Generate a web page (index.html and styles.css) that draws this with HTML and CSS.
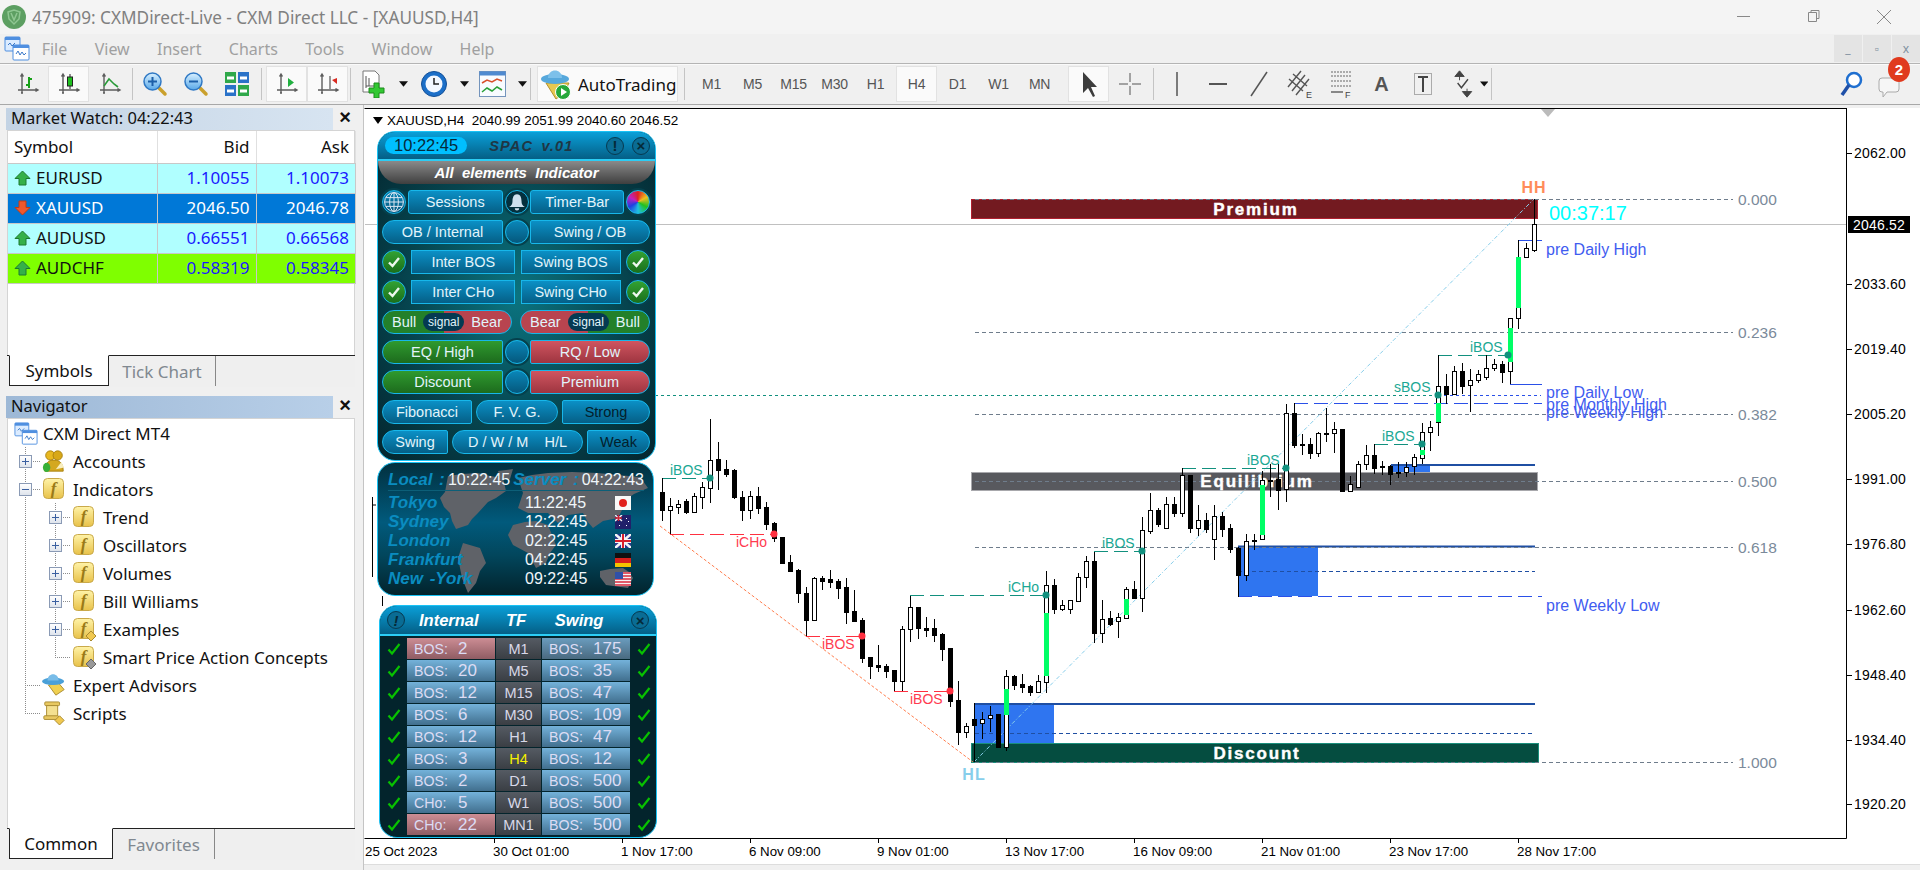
FILE: index.html
```html
<!DOCTYPE html>
<html lang="en">
  <head>
    <meta charset="UTF-8" />
    <title>475909: CXMDirect-Live - CXM Direct LLC - [XAUUSD,H4]</title>
    <link rel="stylesheet" href="styles.css">
  </head>
  <body>
    <!-- shared icons -->
    <svg class="defs" width="0" height="0">
      <defs>
        <linearGradient id="gold" x1="0" y1="0" x2="0" y2="1"><stop offset="0" stop-color="#fff3a8"/><stop offset="1" stop-color="#e8c24a"/></linearGradient>
        <linearGradient id="lens" x1="0" y1="0" x2="0" y2="1"><stop offset="0" stop-color="#d8f0ff"/><stop offset="1" stop-color="#58a8e8"/></linearGradient>
        <symbol id="i-app" viewBox="0 0 26 26">
          <rect x="1" y="1" width="15" height="14" rx="1" fill="#dcecff" stroke="#4f8fe0"/><rect x="1" y="1" width="15" height="3" fill="#4f8fe0"/>
          <rect x="9" y="9" width="16" height="15" rx="1" fill="#fff" stroke="#4f8fe0"/><rect x="9" y="9" width="16" height="3" fill="#4f8fe0"/>
          <path d="M4 9l2-2 2 3 3-3M12 18l2-3 2 4 2-3 2 3 2-2" fill="none" stroke="#3a78c8"/>
        </symbol>
        <symbol id="i-axis" viewBox="0 0 24 24">
          <path d="M6 2v19M2 18h20M4.5 4.5L6 2l1.5 2.5M19.5 16.5L22 18l-2.500 1.500M5 21h2" fill="none" stroke="#5c5c5c" stroke-width="1.400"/>
        </symbol>
        <symbol id="i-f" viewBox="0 0 24 24">
          <rect x="1.500" y="1.500" width="20" height="20" rx="4" fill="url(#gold)" stroke="#c9a94a"/>
          <text x="11.500" y="17" text-anchor="middle" class="icon-f">f</text>
        </symbol>
        <symbol id="i-zoom" viewBox="0 0 26 26">
          <path d="M16 16l7 7" stroke="#caa02c" stroke-width="3.500" stroke-linecap="round"/>
          <circle cx="10.500" cy="10.500" r="8.500" fill="url(#lens)" stroke="#2f78c4" stroke-width="1.500"/>
        </symbol>
        <symbol id="i-drop" viewBox="0 0 10 6"><path d="M0 0h10L5 6z" fill="#111"/></symbol>
        <symbol id="i-up" viewBox="0 0 17 16"><path d="M8.500 1L16 8.500h-4V15H5V8.500H1z" fill="#35b04a" stroke="#1c7a30"/></symbol>
        <symbol id="i-down" viewBox="0 0 17 16"><path d="M8.500 15L1 7.500h4V1h7v6.500h4z" fill="#f0582c" stroke="#c03a14"/></symbol>
        <symbol id="i-check" viewBox="0 0 14 14"><path d="M1.500 7.500L5 11.500 12.500 2" fill="none" stroke="#08c000" stroke-width="2.200"/></symbol>
        <symbol id="i-tick" viewBox="0 0 14 14"><path d="M2 7.500L5.500 11 12 3" fill="none" stroke="#eef7ee" stroke-width="2.400"/></symbol>
      </defs>
    </svg>

    <header class="titlebar">
      <svg class="titlebar__logo" width="24" height="24" viewBox="0 0 24 24"><circle cx="12" cy="12" r="12" fill="#5d9f62"/><path d="M6 7l6-2 6 2-1 7-5 5-5-5zM9 8l3 7 3-7" fill="none" stroke="#8fc792" stroke-width="1.500"/></svg>
      <span class="titlebar__text">475909: CXMDirect-Live - CXM Direct LLC - [XAUUSD,H4]</span>
      <div class="winctl">
        <span class="winctl__btn">
          <svg width="14" height="14" viewBox="0 0 14 14"><path d="M0 7.500h13" stroke="#888"/></svg>
        </span>
        <span class="winctl__btn">
          <svg width="14" height="14" viewBox="0 0 14 14"><path d="M1.500 3.500h8v9h-8zM4 3.500V1.500h8v8h-2.500" fill="none" stroke="#888"/></svg>
        </span>
        <span class="winctl__btn">
          <svg width="16" height="16" viewBox="0 0 16 16"><path d="M1 1l14 14M15 1L1 15" stroke="#888"/></svg>
        </span>
      </div>
    </header>

    <nav class="menubar">
      <svg class="menubar__icon" width="26" height="26"><use href="#i-app"/></svg>
      <span class="menubar__item">File</span>
      <span class="menubar__item">View</span>
      <span class="menubar__item">Insert</span>
      <span class="menubar__item">Charts</span>
      <span class="menubar__item">Tools</span>
      <span class="menubar__item">Window</span>
      <span class="menubar__item">Help</span>
      <div class="mdi">
        <span class="mdi__btn">_</span><span class="mdi__btn">▫</span><span class="mdi__btn">x</span>
      </div>
    </nav>

    <div class="toolbar">
      <span class="grip"></span>
      <span class="tool"><svg width="24" height="24"><use href="#i-axis"/><path d="M13 5v11M13 7h3M10 13h3" stroke="#18a018" stroke-width="2"/></svg></span>
      <span class="tool is-on"><svg width="24" height="24"><use href="#i-axis"/><path d="M13 2v15" stroke="#222"/><rect x="10.500" y="5" width="5" height="9" fill="#20c020" stroke="#222"/></svg></span>
      <span class="tool"><svg width="24" height="24"><use href="#i-axis"/><path d="M6 14l5-7 5 5 4 3" fill="none" stroke="#2a9a3a" stroke-width="1.600"/></svg></span>
      <span class="sep sep--tight"></span>
      <span class="tool"><svg width="26" height="26"><use href="#i-zoom"/><path d="M6 10.500h9M10.500 6v9" stroke="#1c5fa8" stroke-width="2"/></svg></span>
      <span class="tool"><svg width="26" height="26"><use href="#i-zoom"/><path d="M6 10.500h9" stroke="#1c5fa8" stroke-width="2"/></svg></span>
      <span class="tool"><svg width="26" height="26" viewBox="0 0 26 26"><rect x="1" y="1" width="11" height="11" fill="#2fa84a"/><rect x="14" y="1" width="11" height="11" fill="#2a72c8"/><rect x="1" y="14" width="11" height="11" fill="#2a72c8"/><rect x="14" y="14" width="11" height="11" fill="#2fa84a"/><path d="M3 7h7M16 7h7M3 20h7M16 20h7" stroke="#fff" stroke-width="3"/></svg></span>
      <span class="sep sep--wide"></span>
      <span class="tool is-on"><svg width="24" height="24"><use href="#i-axis"/><path d="M13 6v9l6-4.500z" fill="#22b040"/></svg></span>
      <span class="tool is-on"><svg width="24" height="24"><use href="#i-axis"/><path d="M14 4v13" stroke="#333"/><path d="M16 8l5-2v6z" fill="#d82a20"/></svg></span>
      <span class="sep"></span>
      <span class="tool tool--drop"><svg width="26" height="28" viewBox="0 0 26 28"><path d="M2 1h12l4 4v17H2z" fill="#fff" stroke="#777"/><path d="M5 6v12M5 16h9M8 8v8" stroke="#555"/><path d="M13 13h5v5h5v5h-5v5h-5v-5H8v-5h5z" fill="#32c832" stroke="#1c8a1c"/></svg><svg width="9" height="6"><use href="#i-drop"/></svg></span>
      <span class="tool tool--drop"><svg width="28" height="28" viewBox="0 0 28 28"><circle cx="14" cy="14" r="12.500" fill="#1c6fc8" stroke="#124e96"/><circle cx="14" cy="14" r="8.500" fill="#f4f8ff"/><path d="M14 8v6h5" fill="none" stroke="#222" stroke-width="1.500"/></svg><svg width="9" height="6"><use href="#i-drop"/></svg></span>
      <span class="tool tool--drop"><svg width="27" height="26" viewBox="0 0 27 26"><rect x=".5" y=".5" width="26" height="25" fill="#f8fbff" stroke="#7494bc"/><rect x=".5" y=".5" width="26" height="4" fill="#4f8ad0"/><path d="M3 12l5-3 5 2 5-3 5 2" fill="none" stroke="#d8502c" stroke-width="1.500"/><path d="M3 21l5-4 5 3 5-4 5 3" fill="none" stroke="#28a038" stroke-width="1.500"/></svg><svg width="9" height="6"><use href="#i-drop"/></svg></span>
      <span class="sep sep--auto"></span>
      <span class="grip"></span>
      <span class="autotrade">
        <svg width="32" height="34" viewBox="0 0 32 34"><path d="M6 16l10 16 8-6 5-10z" fill="#e8c850" stroke="#b09030"/><ellipse cx="15" cy="12" rx="14" ry="5" fill="#56a8dc"/><path d="M8 11c0-10 14-10 14 0z" fill="#7cc0ea"/><circle cx="23" cy="25" r="7.500" fill="#26a83a" stroke="#fff"/><path d="M21 21v8l6-4z" fill="#fff"/></svg>
        <span>AutoTrading</span>
      </span>
      <span class="sep sep--period"></span>
      <span class="tool tool--text">M1</span>
      <span class="tool tool--text">M5</span>
      <span class="tool tool--text">M15</span>
      <span class="tool tool--text">M30</span>
      <span class="tool tool--text">H1</span>
      <span class="tool tool--text is-on">H4</span>
      <span class="tool tool--text">D1</span>
      <span class="tool tool--text">W1</span>
      <span class="tool tool--text">MN</span>
      <span class="grip grip--draw"></span>
      <span class="tool is-on"><svg width="18" height="28" viewBox="0 0 18 28"><path d="M3 2v21l5-5 5 9 2-1-4-9h6z" fill="#3c3c3c"/></svg></span>
      <span class="tool"><svg width="24" height="24" viewBox="0 0 24 24"><path d="M12 1v9M12 14v9M1 12h9M14 12h9" stroke="#555"/></svg></span>
      <span class="sep sep--draw"></span>
      <span class="tool"><svg width="8" height="28" viewBox="0 0 8 28"><path d="M4 2v24" stroke="#555" stroke-width="1.500"/></svg></span>
      <span class="tool"><svg width="22" height="8" viewBox="0 0 22 8"><path d="M2 4h18" stroke="#555" stroke-width="2"/></svg></span>
      <span class="tool"><svg width="22" height="28" viewBox="0 0 22 28"><path d="M3 26L19 2" stroke="#555" stroke-width="1.500"/></svg></span>
      <span class="tool"><svg width="28" height="30" viewBox="0 0 28 30"><path d="M2 18L15 2M6 22L19 6M10 26L23 10M3 10l14 12M7 5l14 12" fill="none" stroke="#555" stroke-width="1.400"/><text x="20" y="29" class="icon-mark">E</text></svg></span>
      <span class="tool"><svg width="26" height="30" viewBox="0 0 26 30"><path d="M3 3h20M3 7h20M3 12h20M3 17h20" stroke="#666" stroke-dasharray="2 1"/><path d="M3 23h12" stroke="#666" stroke-width="1.500"/><text x="17" y="29" class="icon-mark">F</text></svg></span>
      <span class="tool"><span class="tool__a">A</span></span>
      <span class="tool"><svg width="22" height="28" viewBox="0 0 22 28"><rect x="2.500" y="3.500" width="17" height="21" fill="none" stroke="#666" stroke-dasharray="1 1"/><path d="M6 7h10M11 7v15" stroke="#444" stroke-width="2"/></svg></span>
      <span class="tool tool--drop tool--arrows"><svg width="24" height="30" viewBox="0 0 24 30"><path d="M8 1l5 6H3zM8 7v4" fill="#444" stroke="#444"/><path d="M6 14l4 5 7-9" fill="none" stroke="#444" stroke-width="1.500"/><path d="M16 29l-5-6h10zM16 23v-3" fill="#444" stroke="#444"/></svg><svg width="9" height="6"><use href="#i-drop"/></svg></span>
      <span class="sep sep--thin"></span>
      <span class="toolbar__end">
        <svg width="24" height="26" viewBox="0 0 24 26"><circle cx="14" cy="9" r="7" fill="#fff" stroke="#1f6fd0" stroke-width="2.500"/><path d="M9 14L2 24" stroke="#1f50a8" stroke-width="3.500"/></svg>
        <span class="chatbox">
          <svg width="26" height="24" viewBox="0 0 26 24"><path d="M4 2h14a3 3 0 013 3v8a3 3 0 01-3 3H9l-4 5v-5H4a3 3 0 01-3-3V5a3 3 0 013-3z" fill="#f6f6f6" stroke="#aaa"/></svg>
          <span class="chatbox__badge">2</span>
        </span>
      </span>
    </div>

    <main class="workspace">
      <aside class="sidebar">
        <section class="dock dock--market">
          <div class="dock__title dock__title--dim"><span>Market Watch: 04:22:43</span><b class="dock__close">×</b></div>
          <div class="dock__body">
            <table class="watch">
              <thead><tr><th class="watch__sym">Symbol</th><th>Bid</th><th>Ask</th></tr></thead>
              <tbody>
                <tr class="row-cyan"><td class="watch__sym"><svg width="17" height="16"><use href="#i-up"/></svg>EURUSD</td><td>1.10055</td><td>1.10073</td></tr>
                <tr class="row-sel"><td class="watch__sym"><svg width="17" height="16"><use href="#i-down"/></svg>XAUUSD</td><td>2046.50</td><td>2046.78</td></tr>
                <tr class="row-cyan"><td class="watch__sym"><svg width="17" height="16"><use href="#i-up"/></svg>AUDUSD</td><td>0.66551</td><td>0.66568</td></tr>
                <tr class="row-lime"><td class="watch__sym"><svg width="17" height="16"><use href="#i-up"/></svg>AUDCHF</td><td>0.58319</td><td>0.58345</td></tr>
              </tbody>
            </table>
          </div>
          <div class="tabs"><span class="tabs__item is-active">Symbols</span><span class="tabs__item tabs__item--second">Tick Chart</span></div>
        </section>

        <section class="dock dock--nav">
          <div class="dock__title"><span>Navigator</span><b class="dock__close">×</b></div>
          <div class="dock__body tree">
            <div class="tree__row tree__row--root"><svg width="24" height="24"><use href="#i-app"/></svg><span>CXM Direct MT4</span></div>
            <div class="tree__row"><span class="g g--t"><i class="exp"></i></span>
              <svg width="24" height="24" viewBox="0 0 26 26"><circle cx="9" cy="7" r="5" fill="#e8b820" stroke="#a88010"/><circle cx="17" cy="7" r="5" fill="#d8a818" stroke="#a88010"/><path d="M3 24c0-12 8-12 10-12s10 0 10 12z" fill="#d4a820" stroke="#a88010"/><path d="M15 22l6-8 3 6z" fill="#f8eec0"/><ellipse cx="5" cy="20" rx="4" ry="5" fill="#38b038"/></svg>
              <span>Accounts</span></div>
            <div class="tree__row"><span class="g g--t"><i class="exp is-open"></i></span><svg width="24" height="24"><use href="#i-f"/></svg><span>Indicators</span></div>
            <div class="tree__row"><span class="g g--v"></span><span class="g g--t"><i class="exp"></i></span><svg width="24" height="24"><use href="#i-f"/></svg><span>Trend</span></div>
            <div class="tree__row"><span class="g g--v"></span><span class="g g--t"><i class="exp"></i></span><svg width="24" height="24"><use href="#i-f"/></svg><span>Oscillators</span></div>
            <div class="tree__row"><span class="g g--v"></span><span class="g g--t"><i class="exp"></i></span><svg width="24" height="24"><use href="#i-f"/></svg><span>Volumes</span></div>
            <div class="tree__row"><span class="g g--v"></span><span class="g g--t"><i class="exp"></i></span><svg width="24" height="24"><use href="#i-f"/></svg><span>Bill Williams</span></div>
            <div class="tree__row"><span class="g g--v"></span><span class="g g--t"><i class="exp"></i></span><svg width="24" height="24"><use href="#i-f"/><path d="M19 14l5 5-5 5-5-5z" fill="#f0c850" stroke="#a88a30"/></svg><span>Examples</span></div>
            <div class="tree__row"><span class="g g--v"></span><span class="g g--l"></span><svg width="24" height="24"><use href="#i-f"/><path d="M19 14l5 5-5 5-5-5z" fill="#999" stroke="#666"/></svg><span>Smart Price Action Concepts</span></div>
            <div class="tree__row"><span class="g g--t"></span>
              <svg width="24" height="24" viewBox="0 0 26 26"><path d="M7 13l8 11 9-6-6-7z" fill="#f0d050" stroke="#a88a30"/><ellipse cx="12" cy="9" rx="12" ry="4" fill="#4aa0d8"/><path d="M6 8c0-9 12-9 12 0z" fill="#78bce8"/></svg>
              <span>Expert Advisors</span></div>
            <div class="tree__row"><span class="g g--l"></span>
              <svg width="24" height="24" viewBox="0 0 26 26"><rect x="3" y="1" width="16" height="4" rx="1" fill="#e8c860" stroke="#a88a30"/><rect x="5" y="5" width="12" height="13" fill="#f4e090" stroke="#a88a30"/><rect x="2" y="16" width="16" height="4" rx="1" fill="#e8c860" stroke="#a88a30"/><path d="M19 16l5 5-5 5-5-5z" fill="#f0c850" stroke="#a88a30"/></svg>
              <span>Scripts</span></div>
          </div>
          <div class="tabs"><span class="tabs__item is-active tabs__item--wide">Common</span><span class="tabs__item tabs__item--second tabs__item--fav">Favorites</span></div>
        </section>
      </aside>

      <section class="chart">
        <!-- viewBox uses page coordinates, the chart starts at 364,108 -->
        <svg class="chart__canvas" width="1556" height="756" viewBox="364 108 1556 756">
          <path d="M364.500 108.500H1846.500V838.500H364.500" fill="none" stroke="#000"/>
          <path d="M373 117h10l-5 7z" fill="#000"/>
          <text x="387" y="125" class="t-info">XAUUSD,H4  2040.99 2051.99 2040.60 2046.52</text>
          <path d="M1541 109h14l-7 8z" fill="#bbb"/>

          <path d="M365 224.500H1846" stroke="#c0c0c0"/>
          <!-- order blocks -->
          <rect x="975" y="703" width="79" height="42" fill="#2f75f0"/>
          <rect x="1238" y="546" width="80" height="50" fill="#2f75f0"/>
          <rect x="1391" y="465" width="39" height="7" fill="#2f75f0"/>
          <path d="M975 704H1535M1238 546.500H1535M1391 465H1535" stroke="#1f4fa3" stroke-width="2"/>
          <path d="M975 733.500H1535M1238 571.500H1535" stroke="#1f4fa3" stroke-dasharray="4 3"/>

          <!-- premium / equilibrium / discount -->
          <rect x="971.500" y="199.500" width="566" height="19" fill="#731a20" stroke="#b02030"/>
          <rect x="971.500" y="472.500" width="566" height="18" fill="#58595e" stroke="#a8a8ac"/>
          <rect x="971.500" y="743.500" width="567" height="19" fill="#054d40" stroke="#1a8f7c"/>

          <!-- fibonacci levels -->
          <path class="fib" d="M975 199.500H1733M975 332.500H1733M975 414.500H1733M975 481.500H1733M975 547.500H1733M975 762.500H1733"/>
          <text x="1738" y="205" class="t-fib">0.000</text>
          <text x="1738" y="338" class="t-fib">0.236</text>
          <text x="1738" y="420" class="t-fib">0.382</text>
          <text x="1738" y="487" class="t-fib">0.500</text>
          <text x="1738" y="553" class="t-fib">0.618</text>
          <text x="1738" y="768" class="t-fib">1.000</text>

          <text x="1256" y="215" class="t-band">Premium</text>
          <text x="1257" y="487" class="t-band">Equilibrium</text>
          <text x="1257" y="759" class="t-band">Discount</text>

          <!-- swing legs -->
          <path d="M660 526L973 762" stroke="#ff7f50" stroke-dasharray="3 2" fill="none"/>
          <path d="M974 762L1534 199" stroke="#87ceeb" stroke-dasharray="4 2 1 2" fill="none"/>

          <!-- structure lines -->
          <path class="s-long s-green" d="M662 478.500H710M910 595.500H1046M1094 551.500H1142M1182 468.500H1286M1374 444.500H1422M1438 355.500H1510"/>
          <path class="s-long s-red" d="M670 534.500H774M806 636.500H862M894 691.500H950"/>
          <path d="M655 395.500H1438" stroke="#12907e" stroke-dasharray="3 3"/>
          <path d="M1438 395.500H1541" stroke="#2a50e8" stroke-dasharray="3 3"/>
          <path class="s-long s-blue" d="M1294 403.500H1542M1238 596.500H1542"/>
          <path d="M1518 240.500H1542M1510 384.500H1542" stroke="#2a50e8" stroke-width="1"/>
          <path d="M372.500 497V577M372 505h4M382.500 596v10" stroke="#000"/>

          <g id="candles"></g>

          <circle cx="710" cy="478" r="3.500" fill="#12907e"/>
          <circle cx="1046" cy="595" r="3.500" fill="#12907e"/>
          <circle cx="1142" cy="551" r="3.500" fill="#12907e"/>
          <circle cx="1286" cy="468" r="3.500" fill="#12907e"/>
          <circle cx="1422" cy="444" r="3.500" fill="#12907e"/>
          <circle cx="1438" cy="395" r="3.500" fill="#12907e"/>
          <circle cx="1508" cy="355" r="3.500" fill="#12907e"/>
          <circle cx="774" cy="534" r="3.500" fill="#ff3040"/>
          <circle cx="862" cy="636" r="3.500" fill="#ff3040"/>
          <circle cx="950" cy="691" r="3.500" fill="#ff3040"/>

          <text x="670" y="475" class="t-sig t-sig--g">iBOS</text>
          <text x="1008" y="592" class="t-sig t-sig--g">iCHo</text>
          <text x="1102" y="548" class="t-sig t-sig--g">iBOS</text>
          <text x="1247" y="465" class="t-sig t-sig--g">iBOS</text>
          <text x="1382" y="441" class="t-sig t-sig--g">iBOS</text>
          <text x="1470" y="352" class="t-sig t-sig--g">iBOS</text>
          <text x="1394" y="392" class="t-sig t-sig--g">sBOS</text>
          <text x="736" y="547" class="t-sig t-sig--r">iCHo</text>
          <text x="822" y="649" class="t-sig t-sig--r">iBOS</text>
          <text x="910" y="704" class="t-sig t-sig--r">iBOS</text>

          <text x="1534" y="193" class="t-swing t-swing--hh">HH</text>
          <text x="974" y="780" class="t-swing t-swing--hl">HL</text>
          <text x="1549" y="220" class="t-timer">00:37:17</text>

          <text x="1546" y="255" class="t-pre">pre Daily High</text>
          <text x="1546" y="398" class="t-pre">pre Daily Low</text>
          <text x="1546" y="410" class="t-pre">pre Monthly High</text>
          <text x="1546" y="418" class="t-pre">pre Weekly High</text>
          <text x="1546" y="611" class="t-pre">pre Weekly Low</text>

          <!-- axes -->
          <path d="M1846.500 108V838" stroke="#000"/>
          <path d="M1847 153.500h5M1847 284.500h5M1847 349.500h5M1847 414.500h5M1847 479.500h5M1847 544.500h5M1847 610.500h5M1847 675.500h5M1847 740.500h5M1847 804.500h5" stroke="#000"/>
          <path d="M494.500 838v5M622.500 838v5M750.500 838v5M878.500 838v5M1006.500 838v5M1134.500 838v5M1262.500 838v5M1390.500 838v5M1518.500 838v5" stroke="#000"/>
          <g class="t-axis">
            <text x="1854" y="158">2062.00</text>
            <text x="1854" y="289">2033.60</text>
            <text x="1854" y="354">2019.40</text>
            <text x="1854" y="419">2005.20</text>
            <text x="1854" y="484">1991.00</text>
            <text x="1854" y="549">1976.80</text>
            <text x="1854" y="615">1962.60</text>
            <text x="1854" y="680">1948.40</text>
            <text x="1854" y="745">1934.40</text>
            <text x="1854" y="809">1920.20</text>
          </g>
          <rect x="1848" y="216" width="62" height="17" fill="#000"/>
          <text x="1853" y="230" class="t-axis t-axis--now">2046.52</text>
          <g class="t-axis t-axis--time">
            <text x="365" y="856">25 Oct 2023</text>
            <text x="493" y="856">30 Oct 01:00</text>
            <text x="621" y="856">1 Nov 17:00</text>
            <text x="749" y="856">6 Nov 09:00</text>
            <text x="877" y="856">9 Nov 01:00</text>
            <text x="1005" y="856">13 Nov 17:00</text>
            <text x="1133" y="856">16 Nov 09:00</text>
            <text x="1261" y="856">21 Nov 01:00</text>
            <text x="1389" y="856">23 Nov 17:00</text>
            <text x="1517" y="856">28 Nov 17:00</text>
          </g>
        </svg>

        <!-- indicator control panel -->
        <div class="spac">
          <div class="spac__head">
            <span class="spac__clock">10:22:45</span>
            <span class="spac__name">SPAC v.01</span>
            <span class="roundbtn">!</span>
            <span class="roundbtn">×</span>
          </div>
          <div class="spac__sub">All&nbsp; elements&nbsp; Indicator</div>
          <div class="spac__rows">
            <div class="srow">
              <span class="knob"><svg width="20" height="20" viewBox="0 0 16 16"><g fill="none" stroke="#dbe6f2" stroke-width="0.800"><circle cx="8" cy="8" r="7.500"/><ellipse cx="8" cy="8" rx="3.500" ry="7.500"/><path d="M.5 8h15M1.500 4.500h13M1.500 11.500h13M8 .5v15"/></g></svg></span>
              <span class="pill pill--mid w95">Sessions</span>
              <span class="knob knob--dark"><svg width="18" height="18" viewBox="0 0 16 16"><path d="M8 1c3 0 4 3 4 6s1 4 3 5.500H1C3 11 4 10 4 7s1-6 4-6zM6 13.500a2 2 0 004 0z" fill="#cfe0ee"/></svg></span>
              <span class="pill pill--mid w94">Timer-Bar</span>
              <span class="knob knob--wheel"></span>
            </div>
            <div class="srow">
              <span class="pill pill--left w121">OB / Internal</span>
              <span class="knob"></span>
              <span class="pill pill--right w120">Swing / OB</span>
            </div>
            <div class="srow">
              <span class="knob knob--on"><svg width="14" height="14"><use href="#i-tick"/></svg></span>
              <span class="pill pill--flat w104">Inter BOS</span>
              <span class="pill pill--flat w100">Swing BOS</span>
              <span class="knob knob--on"><svg width="14" height="14"><use href="#i-tick"/></svg></span>
            </div>
            <div class="srow">
              <span class="knob knob--on"><svg width="14" height="14"><use href="#i-tick"/></svg></span>
              <span class="pill pill--flat w104">Inter CHo</span>
              <span class="pill pill--flat w100">Swing CHo</span>
              <span class="knob knob--on"><svg width="14" height="14"><use href="#i-tick"/></svg></span>
            </div>
            <div class="srow">
              <span class="pill pill--split-gr w130">Bull<i class="signal">signal</i>Bear</span>
              <span class="pill pill--split-rg w130">Bear<i class="signal">signal</i>Bull</span>
            </div>
            <div class="srow">
              <span class="pill pill--left pill--green w121">EQ / High</span>
              <span class="knob"></span>
              <span class="pill pill--right pill--red w120">RQ / Low</span>
            </div>
            <div class="srow">
              <span class="pill pill--left pill--green w121">Discount</span>
              <span class="knob"></span>
              <span class="pill pill--right pill--red w120">Premium</span>
            </div>
            <div class="srow">
              <span class="pill pill--left w90">Fibonacci</span>
              <span class="pill w82">F. V. G.</span>
              <span class="pill pill--right pill--off w88">Strong</span>
            </div>
            <div class="srow">
              <span class="pill pill--left w66">Swing</span>
              <span class="pill w131">D / W / M&nbsp;&nbsp;&nbsp; H/L</span>
              <span class="pill pill--right pill--off w63">Weak</span>
            </div>
          </div>
        </div>

        <!-- world clock panel -->
        <div class="clocks">
          <svg class="clocks__map" width="277" height="134" viewBox="0 0 277 134" fill="#5f6268">
            <path d="M70 13l14-2 16-1 12 3 13 2 3 13-10 7-8 4-10 11-6 6-4 6-12 4-4-8-2-8-6-6-4-9 5-6zM120 8l15-2-3 10-10-1zM85 80l17 5 6 15-6 8-4 12-8 10-6-15-4-20zM135 62l12-3 11-1 12 4 4 10 4 10-6 8-4 10-10 5-8-15-15-8-5-10zM140 15l14-3 16-2 24-1 26 1 20 2 22 2 8 11-14 6-6 4-6 12-4 8-15 3-10 7-6-7-4-8-15 2-10 8-10-10-20 0-10-5 5-15zM222 108l10-2 13-1 6 4 4 6-5 10-22-3-6-8z"/>
          </svg>
          <div class="clocks__top">
            <b>Local :</b><span>10:22:45</span>
            <b>Server :</b><span>04:22:43</span>
          </div>
          <div class="clocks__city"><b>Tokyo</b><span>11:22:45</span>
            <svg class="flag" width="16" height="14" viewBox="0 0 16 14"><rect width="16" height="14" fill="#f8f8f8"/><circle cx="8" cy="7" r="4" fill="#e0201c"/></svg></div>
          <div class="clocks__city"><b>Sydney</b><span>12:22:45</span>
            <svg class="flag" width="16" height="14" viewBox="0 0 16 14"><rect width="16" height="14" fill="#20206a"/><path d="M0 0l7 6M7 0L0 6" stroke="#f0f0f0" stroke-width="1.500"/><path d="M3.500 0v6M0 3h7" stroke="#d02030" stroke-width="1.500"/><path d="M11 3h1v1h-1zM13 6h1v1h-1zM11 10h1v1h-1zM4 10h1v1H4z" fill="#fff"/></svg></div>
          <div class="clocks__city"><b>London</b><span>02:22:45</span>
            <svg class="flag" width="16" height="14" viewBox="0 0 16 14"><rect width="16" height="14" fill="#2a3a90"/><path d="M0 0l16 14M16 0L0 14" stroke="#f4f4f4" stroke-width="2.500"/><path d="M8 0v14M0 7h16" stroke="#f4f4f4" stroke-width="4"/><path d="M8 0v14M0 7h16" stroke="#d8202c" stroke-width="2"/></svg></div>
          <div class="clocks__city"><b>Frankfurt</b><span>04:22:45</span>
            <svg class="flag" width="16" height="14" viewBox="0 0 16 14"><rect width="16" height="5" fill="#111"/><rect y="5" width="16" height="5" fill="#d8201c"/><rect y="10" width="16" height="4" fill="#f4c400"/></svg></div>
          <div class="clocks__city"><b>New -York</b><span>09:22:45</span>
            <svg class="flag" width="16" height="14" viewBox="0 0 16 14"><rect width="16" height="14" fill="#f4f4f4"/><path d="M0 1h16M0 4h16M0 7h16M0 10h16M0 13h16" stroke="#d8283c" stroke-width="1.500"/><rect width="8" height="7" fill="#3050a8"/></svg></div>
        </div>

        <!-- timeframe scanner panel -->
        <div class="scan">
          <div class="scan__head">
            <span class="roundbtn">!</span>
            <b class="scan__h1">Internal</b><b class="scan__h2">TF</b><b class="scan__h3">Swing</b>
            <span class="roundbtn">×</span>
          </div>
          <div class="scan__rows">
            <div class="scan__row"><svg width="14" height="14"><use href="#i-check"/></svg><span class="cell cell--red"><i>BOS:</i>2</span><span class="tf">M1</span><span class="cell cell--dim"><i>BOS:</i>175</span><svg width="14" height="14"><use href="#i-check"/></svg></div>
            <div class="scan__row"><svg width="14" height="14"><use href="#i-check"/></svg><span class="cell"><i>BOS:</i>20</span><span class="tf">M5</span><span class="cell"><i>BOS:</i>35</span><svg width="14" height="14"><use href="#i-check"/></svg></div>
            <div class="scan__row"><svg width="14" height="14"><use href="#i-check"/></svg><span class="cell"><i>BOS:</i>12</span><span class="tf">M15</span><span class="cell"><i>BOS:</i>47</span><svg width="14" height="14"><use href="#i-check"/></svg></div>
            <div class="scan__row"><svg width="14" height="14"><use href="#i-check"/></svg><span class="cell"><i>BOS:</i>6</span><span class="tf">M30</span><span class="cell"><i>BOS:</i>109</span><svg width="14" height="14"><use href="#i-check"/></svg></div>
            <div class="scan__row"><svg width="14" height="14"><use href="#i-check"/></svg><span class="cell"><i>BOS:</i>12</span><span class="tf">H1</span><span class="cell"><i>BOS:</i>47</span><svg width="14" height="14"><use href="#i-check"/></svg></div>
            <div class="scan__row"><svg width="14" height="14"><use href="#i-check"/></svg><span class="cell"><i>BOS:</i>3</span><span class="tf tf--now">H4</span><span class="cell"><i>BOS:</i>12</span><svg width="14" height="14"><use href="#i-check"/></svg></div>
            <div class="scan__row"><svg width="14" height="14"><use href="#i-check"/></svg><span class="cell"><i>BOS:</i>2</span><span class="tf">D1</span><span class="cell"><i>BOS:</i>500</span><svg width="14" height="14"><use href="#i-check"/></svg></div>
            <div class="scan__row"><svg width="14" height="14"><use href="#i-check"/></svg><span class="cell"><i>CHo:</i>5</span><span class="tf">W1</span><span class="cell"><i>BOS:</i>500</span><svg width="14" height="14"><use href="#i-check"/></svg></div>
            <div class="scan__row"><svg width="14" height="14"><use href="#i-check"/></svg><span class="cell cell--red"><i>CHo:</i>22</span><span class="tf">MN1</span><span class="cell"><i>BOS:</i>500</span><svg width="14" height="14"><use href="#i-check"/></svg></div>
          </div>
        </div>
      </section>
    </main>

    <script src="chart.js"></script>
  </body>
</html>
```

FILE: styles.css
```css
* {
  box-sizing: border-box;
}

body {
  margin: 0;
  width: 1920px;
  height: 870px;
  overflow: hidden;
  display: flex;
  flex-direction: column;
  background-color: #f0f0f0;
  font-family: "Noto Sans", "Liberation Sans", sans-serif;
  font-size: 16px;
  color: #111;
}

.defs {
  display: block;
  height: 0;
}

.icon-f {
  font: italic bold 17px "Liberation Serif", serif;
  fill: #9a7a18;
}

.icon-mark {
  font: 9px "Liberation Sans", sans-serif;
  fill: #444;
}

/* title and menu */
.titlebar {
  height: 34px;
  display: flex;
  align-items: center;
  padding-left: 2px;
  background-color: #f4f4f4;
  flex-shrink: 0;
}

.titlebar__text {
  margin-left: 6px;
  color: #808080;
  font-size: 17.200px;
}

.winctl {
  margin-left: auto;
  display: flex;
  padding-right: 1px;
}

.winctl__btn {
  width: 70px;
  display: flex;
  justify-content: center;
}

.menubar {
  height: 30px;
  display: flex;
  align-items: center;
  padding-left: 4px;
  background-color: #f0f0f0;
  border-bottom: 1px solid #b4b4b4;
  flex-shrink: 0;
}

.menubar__item {
  padding: 0 13.700px;
  color: #a0a0a0;
  font-size: 16px;
}

.menubar__icon {
  margin-right: -2px;
}

.mdi {
  margin-left: auto;
  display: flex;
  gap: 1px;
  align-self: stretch;
  padding: 1px 0;
}

.mdi__btn {
  width: 28px;
  display: flex;
  align-items: center;
  justify-content: center;
  background-color: #e4e4e4;
  color: #8090a0;
  font-size: 12px;
}

/* toolbar */
.toolbar {
  height: 41px;
  display: flex;
  align-items: center;
  padding-left: 2px;
  background-color: #f0f0f0;
  border-bottom: 1px solid #a8a8a8;
  box-shadow: inset 0 1px 0 #fafafa;
  flex-shrink: 0;
}

.grip {
  width: 4px;
  height: 32px;
  margin: 0 0.500px;
  background-image: radial-gradient(#999 40%, transparent 45%);
  background-size: 2px 2px;
  flex-shrink: 0;
}

.grip--draw {
  margin-right: 3.500px;
}

.tool {
  width: 41px;
  height: 36px;
  display: flex;
  align-items: center;
  justify-content: center;
  gap: 5px;
  flex-shrink: 0;
  border: 1px solid transparent;
  color: #555;
}

.tool--text {
  font: 14px "Liberation Sans", sans-serif;
  letter-spacing: -0.300px;
}

.tool.is-on {
  background-color: #fafafa;
  border-color: #e2e2e2;
}

.tool--drop {
  width: 59px;
  gap: 12px;
  justify-content: flex-start;
  padding-left: 8px;
}

.tool--arrows {
  width: 46px;
  gap: 5px;
}

.tool__a {
  font: bold 20px "Liberation Sans", sans-serif;
  color: #555;
}

.sep {
  width: 4px;
  height: 32px;
  flex-shrink: 0;
  background: linear-gradient(#c4c4c4, #c4c4c4) center / 1px 100% no-repeat;
}

.sep--wide {
  width: 9px;
}

.sep--tight {
  width: 4px;
}

.sep--auto {
  width: 3px;
}

.sep--period {
  width: 13px;
}

.sep--draw {
  width: 6px;
}

.sep--thin {
  width: 4px;
}

.autotrade {
  width: 141px;
  height: 36px;
  display: flex;
  align-items: center;
  gap: 6px;
  padding-left: 2px;
  background-color: #fafafa;
  border: 1px solid #e2e2e2;
  font-size: 17px;
  color: #111;
  flex-shrink: 0;
}

.toolbar__end {
  margin-left: auto;
  display: flex;
  align-items: center;
  gap: 14px;
  padding-right: 16px;
}

.chatbox {
  position: relative;
  display: flex;
  margin-top: 8px;
}

.chatbox__badge {
  position: absolute;
  right: -6px;
  top: -19px;
  width: 22px;
  height: 25px;
  border-radius: 50%;
  display: flex;
  align-items: center;
  justify-content: center;
  background-color: #e03a1e;
  color: #fff;
  font: bold 15px "Liberation Sans", sans-serif;
}

/* main area */
.workspace {
  flex: 1;
  display: flex;
  min-height: 0;
}

.sidebar {
  width: 364px;
  padding: 3px 8px 0 6px;
  display: flex;
  flex-direction: column;
  gap: 9px;
  border-right: 1px solid #c4c4c4;
  flex-shrink: 0;
}

.dock {
  display: flex;
  flex-direction: column;
}

.dock--market {
  height: 279px;
}

.dock--nav {
  height: 464px;
}

.dock__title {
  height: 22px;
  padding: 0 0 3px 5px;
  display: flex;
  align-items: center;
  justify-content: space-between;
  flex-shrink: 0;
  background: linear-gradient(90deg, #9db8d6, #b8cfe8) 0 0 / 327px 100% no-repeat;
  font-size: 16.500px;
}

.dock__title--dim {
  background-image: linear-gradient(90deg, #c3d3e4, #d7e4f1);
}

.dock__close {
  width: 20px;
  font: bold 20px "Liberation Sans", sans-serif;
  text-align: center;
}

.dock__body {
  flex: 1;
  min-height: 0;
  background-color: #fff;
  margin-left: 1px;
  border: 1px solid #d4d4d4;
  border-bottom: none;
}

.watch {
  width: 348px;
  border-collapse: collapse;
  table-layout: fixed;
  font-size: 17px;
}

.watch th,
.watch td {
  height: 30px;
  padding: 0 6px 1px 0;
  text-align: right;
  font-weight: normal;
  border-right: 1px solid #c8c8c8;
  border-bottom: 1px solid #c8c8c8;
  color: #1a1aff;
}

.watch th {
  height: 32px;
  color: #111;
  border-color: #e0e0e0;
  border-bottom-color: #c8c8c8;
}

.watch th.watch__sym,
.watch td.watch__sym {
  width: 149px;
  padding-left: 6px;
  text-align: left;
  color: #111;
}

.watch th:nth-child(2),
.watch td:nth-child(2) {
  width: 99px;
}

.watch td.watch__sym svg {
  margin-right: 5px;
  vertical-align: -2px;
}

.row-cyan td {
  background-color: #b0ffff;
}

.row-lime td {
  background-color: #7fff00;
}

.row-sel td,
.row-sel td.watch__sym {
  background-color: #0078d7;
  color: #fff;
}

.tabs {
  height: 32px;
  margin-left: 1px;
  padding-left: 2px;
  display: flex;
  border-top: 1px solid #222;
  flex-shrink: 0;
  background-color: #efefef;
  font-size: 17px;
}

.tabs__item {
  display: flex;
  align-items: center;
  justify-content: center;
  height: 30px;
  width: 100px;
  color: #808890;
}

.tabs__item.is-active {
  margin-top: -1px;
  height: 31px;
  background-color: #fff;
  color: #111;
  border: 1px solid #222;
  border-top-color: #fff;
}

.tabs__item--wide {
  width: 104px;
}

.tabs__item--second {
  width: 107px;
  border-right: 1px solid #888;
}

.tabs__item--fav {
  width: 102px;
}

/* navigator tree */
.tree {
  padding: 1px 0 0 2px;
  font-size: 17px;
}

.tree__row {
  height: 28px;
  display: flex;
  align-items: center;
  gap: 7px;
}

.tree__row > svg:first-of-type {
  margin-left: -5px;
  flex-shrink: 0;
}

.tree__row--root {
  height: 27px;
  padding-left: 4px;
  gap: 5px;
}

.tree__row--root > svg:first-of-type {
  margin-left: 0;
}

.g + .g {
  margin-left: -7px;
}

.g {
  width: 30px;
  height: 28px;
  display: flex;
  align-items: center;
  justify-content: center;
  flex-shrink: 0;
  background-repeat: no-repeat;
  --dots-v: repeating-linear-gradient(to bottom, #8c8c8c 0 1px, transparent 1px 2px);
  --dots-h: repeating-linear-gradient(to right, #8c8c8c 0 1px, transparent 1px 2px);
}

.g--v {
  background-image: var(--dots-v);
  background-size: 1px 100%;
  background-position: 15px 0;
}

.g--t {
  background-image: var(--dots-v), var(--dots-h);
  background-size: 1px 100%, 15px 1px;
  background-position: 15px 0, 15px 14px;
}

.g--l {
  background-image: var(--dots-v), var(--dots-h);
  background-size: 1px 14px, 15px 1px;
  background-position: 15px 0, 15px 14px;
}

.exp {
  width: 13px;
  height: 13px;
  border: 1px solid #8a9ab5;
  background:
    linear-gradient(#3a5fa0, #3a5fa0) center / 7px 1px no-repeat,
    linear-gradient(#3a5fa0, #3a5fa0) center / 1px 7px no-repeat,
    linear-gradient(#fff, #dfe4ec);
}

.exp.is-open {
  background:
    linear-gradient(#3a5fa0, #3a5fa0) center / 7px 1px no-repeat,
    linear-gradient(#fff, #dfe4ec);
}

/* chart canvas */
.chart {
  position: relative;
  flex: 1;
  min-width: 0;
  margin: 3px 0 5px;
  background-color: #fff;
  border-bottom: 1px solid #ddd;
}

.chart__canvas {
  display: block;
}

.fib {
  stroke: #6f7d8c;
  stroke-dasharray: 4 3;
  fill: none;
}

.s-long {
  fill: none;
  stroke-dasharray: 14 6;
}

.s-green {
  stroke: #12907e;
}

.s-red {
  stroke: #ff3040;
}

.s-blue {
  stroke: #2a50e8;
}

.t-info {
  font: 13.500px "Liberation Sans", sans-serif;
  white-space: pre;
}

.t-fib {
  font: 15.500px "Liberation Sans", sans-serif;
  fill: #7b8a9a;
}

.t-band {
  font: bold 17px "Liberation Sans", sans-serif;
  letter-spacing: 1.800px;
  fill: #fff;
  stroke: #fff;
  stroke-width: 0.400px;
  text-anchor: middle;
}

.t-sig {
  font: 14px "Liberation Sans", sans-serif;
}

.t-sig--g {
  fill: #1aa894;
}

.t-sig--r {
  fill: #ff3b4f;
}

.t-swing {
  font: bold 16px "Liberation Sans", sans-serif;
  letter-spacing: 1px;
  text-anchor: middle;
}

.t-swing--hh {
  fill: #ff8c5a;
}

.t-swing--hl {
  fill: #87ceeb;
}

.t-timer {
  font: 20px "Liberation Sans", sans-serif;
  fill: #00ffff;
}

.t-pre {
  font: 16px "Liberation Sans", sans-serif;
  fill: #3f5cf0;
}

.t-axis {
  font: 14px "Liberation Sans", sans-serif;
  letter-spacing: 0.200px;
  fill: #000;
}

.t-axis--now {
  fill: #fff;
}

.t-axis--time {
  font-size: 13.300px;
  letter-spacing: 0;
}

/* floating indicator panels */
.spac,
.clocks,
.scan {
  position: absolute;
  border: 1px solid #19c3f5;
  border-radius: 18px;
  overflow: hidden;
  font-family: "Liberation Sans", sans-serif;
}

.spac {
  left: 13px;
  top: 23px;
  width: 279px;
  height: 330px;
  background: radial-gradient(ellipse at center, #0b7480 0, #06454f 55%, #04252e 100%);
}

.spac__head {
  height: 29px;
  display: flex;
  align-items: center;
  padding: 0 5px 0 7px;
  gap: 8px;
  background: linear-gradient(#0a9fd8, #045f86);
  border-bottom: 2px solid #2ccdf5;
}

.spac__clock {
  width: 83px;
  height: 17px;
  display: flex;
  align-items: center;
  justify-content: center;
  border-radius: 9px;
  background-color: #00bfff;
  font-size: 16.500px;
  color: #062a3a;
}

.spac__name {
  margin-left: 14px;
  width: 110px;
  font: italic bold 14.500px "Liberation Sans", sans-serif;
  letter-spacing: 1.200px;
  word-spacing: 3px;
  color: #1f3644;
  white-space: nowrap;
}

.roundbtn {
  width: 18px;
  height: 18px;
  display: flex;
  align-items: center;
  justify-content: center;
  border-radius: 50%;
  border: 1px solid #083a50;
  background-color: #0a6c94;
  color: #052a38;
  font-weight: bold;
  font-size: 15px;
  flex-shrink: 0;
}

.spac__sub {
  height: 23px;
  display: flex;
  align-items: center;
  justify-content: center;
  border-radius: 0 0 24px 24px;
  background: linear-gradient(#8a8a8a, #3f3f3f);
  color: #fff;
  font: italic bold 15px "Liberation Sans", sans-serif;
}

.spac__rows {
  padding: 6px 0 0 4px;
  display: flex;
  flex-direction: column;
  gap: 6px;
}

.srow {
  width: 268px;
  height: 24px;
  display: flex;
  align-items: center;
  justify-content: space-between;
}

.knob {
  width: 24px;
  height: 24px;
  display: flex;
  align-items: center;
  justify-content: center;
  border-radius: 50%;
  border: 1px solid #19b8ea;
  box-shadow: 0 0 0 2px #06404c;
  background: linear-gradient(#0a86b8, #05587c);
  flex-shrink: 0;
}

.knob--dark {
  background: #04303e;
}

.knob--wheel {
  background: conic-gradient(#e02020, #f0c020, #20c020, #20c0e0, #2040e0, #c020c0, #e02020);
}

.knob--on {
  background: linear-gradient(#33a233, #1a6e1a);
}

.pill {
  height: 24px;
  display: flex;
  align-items: center;
  justify-content: center;
  border: 1px solid #17b7ea;
  border-radius: 12px;
  background: linear-gradient(#0b90c6, #055f86);
  color: #e2f4fb;
  font-size: 14.500px;
  flex-shrink: 0;
}

.pill--left {
  border-radius: 12px 2px 2px 12px;
}

.pill--right {
  border-radius: 2px 12px 12px 2px;
}

.pill--mid {
  border-radius: 3px;
}

.pill--flat {
  border-radius: 0;
}

.pill--green {
  background: linear-gradient(#2f9a2f, #1d6b1d);
}

.pill--red {
  background: linear-gradient(#d05560, #9e3540);
}

.pill--off {
  color: #04202c;
}

.pill--split-gr,
.pill--split-rg {
  justify-content: space-between;
  padding: 0 9px;
}

.pill--split-gr {
  background: linear-gradient(90deg, #23802a 48%, #b8444f 48%);
}

.pill--split-rg {
  background: linear-gradient(90deg, #b8444f 52%, #23802a 52%);
}

.signal {
  padding: 2px 5px;
  border-radius: 9px;
  background-color: #053a52;
  font-style: normal;
  font-size: 12px;
}

.w63 { width: 63px; }
.w66 { width: 66px; }
.w82 { width: 82px; }
.w88 { width: 88px; }
.w90 { width: 90px; }
.w94 { width: 94px; }
.w95 { width: 95px; }
.w100 { width: 100px; }
.w104 { width: 104px; }
.w120 { width: 120px; }
.w121 { width: 121px; }
.w130 { width: 130px; }
.w131 { width: 131px; }

.clocks {
  left: 13px;
  top: 354px;
  width: 277px;
  height: 134px;
  padding: 6px 9px 0 10px;
  background: linear-gradient(#02303f, #015a7c 45%, #02465c 70%, #02232c);
  color: #f0f6fa;
  font-size: 16px;
}

.clocks__map {
  position: absolute;
  left: 0;
  top: 0;
}

.clocks__top,
.clocks__city {
  position: relative;
  display: flex;
  align-items: center;
  height: 19px;
  white-space: nowrap;
}

.clocks__top {
  height: 22px;
  margin-bottom: 2px;
  border-bottom: 1px solid #0c5f78;
  justify-content: space-between;
}

.clocks__top b,
.clocks__city b {
  font: italic bold 17px "Liberation Sans", sans-serif;
  color: #0a8cc0;
  word-spacing: 2px;
}

.clocks__city b {
  width: 137px;
  flex-shrink: 0;
}

.clocks__city span {
  width: 90px;
}

.scan {
  left: 15px;
  top: 497px;
  width: 278px;
  height: 233px;
  background-color: #03242c;
}

.scan__head {
  height: 30px;
  display: flex;
  align-items: center;
  padding: 0 7px;
  background: linear-gradient(#0a9fd8, #045f86);
  border-bottom: 2px solid #2ccdf5;
  color: #fff;
  font-style: italic;
  font-size: 16.500px;
}

.scan__h1 {
  margin-left: 14px;
  width: 89px;
}

.scan__h2 {
  width: 50px;
}

.scan__h3 {
  width: 78px;
}

.scan__rows {
  padding-top: 2px;
  display: flex;
  flex-direction: column;
  gap: 1px;
}

.scan__row {
  height: 21px;
  display: grid;
  grid-template-columns: 26px 88px 45px 88px 28px;
  column-gap: 1px;
  align-items: center;
  justify-items: center;
}

.scan__row > svg:first-child {
  margin-left: 2px;
}

.scan__row > svg:last-child {
  margin-right: 3px;
}

.cell {
  width: 100%;
  height: 100%;
  display: flex;
  align-items: center;
  padding-left: 7px;
  background: linear-gradient(#74b2da, #416f8e);
  color: #dcdcf4;
  font-size: 17px;
}

.cell i {
  width: 44px;
  font-style: normal;
  font-size: 14.200px;
}

.cell--red {
  background: linear-gradient(#cc8d94, #8f5c63);
}

.cell--dim {
  background: linear-gradient(#6a9cbe, #4a6a80);
}

.tf {
  width: 100%;
  height: 100%;
  display: flex;
  align-items: center;
  justify-content: center;
  background: linear-gradient(#555b63, #3a3e44);
  color: #d8d8e8;
  font-size: 14.500px;
}

.tf--now {
  color: #f4f000;
}
```

FILE: chart.js
```js
// H4 candles, one every 8px starting at x=662. Values are page y pixels.
// high, low, body top, body bottom, bull (1) or bear (0)
const candles = [
  [478,521,492,510,0],[498,534,506,510,1],[500,514,504,507,1],[499,514,501,512,0],[493,513,496,512,1],
  [482,509,487,497,1],[419,503,460,488,1],[442,490,459,470,0],[460,477,469,474,0],[469,499,470,497,0],
  [491,521,497,510,0],[491,519,496,510,1],[487,514,496,508,0],[502,530,507,524,0],[522,542,523,538,0],
  [537,563,537,563,0],[555,571,562,571,0],[569,603,570,593,0],[587,636,593,620,0],[577,620,578,620,1],
  [576,590,578,581,0],[570,588,579,582,0],[579,599,581,588,0],[578,624,587,612,0],[590,622,611,621,0],
  [618,663,620,658,0],[657,679,657,666,0],[645,672,665,667,0],[664,678,666,671,0],[670,691,670,681,0],
  [626,691,629,681,1],[596,642,607,629,1],[607,639,607,628,0],[617,637,628,630,0],[619,642,628,635,0],
  [633,661,634,649,0],[648,707,648,701,0],[681,745,700,732,0],[723,738,726,732,1],[703,762,719,725,0],
  [712,739,719,723,1],[706,732,715,718,1],[714,747,714,747,0],[670,751,676,747,1],[675,690,676,685,0],
  [674,693,684,687,0],[685,696,686,692,0],[675,693,681,692,1],[571,693,585,682,1],[579,614,585,609,0],
  [600,611,605,609,1],[600,614,600,609,1],[573,601,577,601,1],[556,588,561,577,1],[552,643,561,633,0],
  [600,643,619,633,1],[611,626,618,624,0],[613,638,617,621,1],[587,618,589,618,1],[581,599,589,598,0],
  [517,612,530,598,1],[493,534,510,531,1],[508,527,510,524,0],[497,528,504,528,1],[497,517,504,513,0],
  [468,517,475,513,1],[475,533,475,528,0],[505,536,520,528,1],[513,533,520,529,0],[505,560,516,539,1],
  [512,537,516,529,0],[524,553,528,549,0],[547,597,548,575,0],[534,581,541,575,1],[534,550,540,541,0],
  [471,540,480,539,1],[464,497,480,481,0],[464,510,479,490,0],[404,502,413,489,1],[403,448,413,445,0],
  [434,455,444,445,0],[438,459,444,453,0],[432,457,433,453,1],[408,442,433,434,0],[422,453,429,433,1],
  [429,491,429,491,0],[476,491,484,491,1],[461,487,464,487,1],[445,470,455,464,1],[444,474,455,468,0],
  [461,475,466,467,0],[465,485,466,474,0],[462,478,472,473,0],[462,477,467,472,1],[454,475,457,466,1],
  [423,464,432,458,1],[421,451,427,432,1],[355,436,386,422,1],[374,404,386,394,0],[366,394,371,394,1],
  [363,394,371,386,0],[369,412,380,385,1],[370,383,374,380,1],[355,380,368,377,1],[359,371,364,368,1],
  [361,383,364,372,0],[318,384,318,371,1],[240,329,257,318,1],[243,257,248,257,1],[199,252,224,250,1]
];

// candles whose body carries the bright signal bar: index, top, bottom
const signalBars = [
  [43,689,715],[48,613,676],[58,599,615],[75,485,535],[95,450,455],[97,403,422],[106,328,362],[107,257,308]
];

const SVG_NS = "http://www.w3.org/2000/svg";
const layer = document.getElementById("candles");

function add(tag, attrs) {
  const el = document.createElementNS(SVG_NS, tag);
  for (const key in attrs) el.setAttribute(key, attrs[key]);
  layer.appendChild(el);
}

candles.forEach(function (c, i) {
  const x = 662 + i * 8;
  add("path", { d: `M${x + 0.5} ${c[0]}V${c[1]}`, stroke: "#000" });
  add("rect", {
    x: x - 1.5,
    y: c[2] + 0.5,
    width: 4,
    height: Math.max(c[3] - c[2], 1),
    fill: c[4] ? "#fff" : "#000",
    stroke: "#000",
  });
});

signalBars.forEach(function (b) {
  add("rect", { x: 660 + b[0] * 8, y: b[1], width: 5, height: b[2] - b[1], fill: "#00ff66" });
});
```
